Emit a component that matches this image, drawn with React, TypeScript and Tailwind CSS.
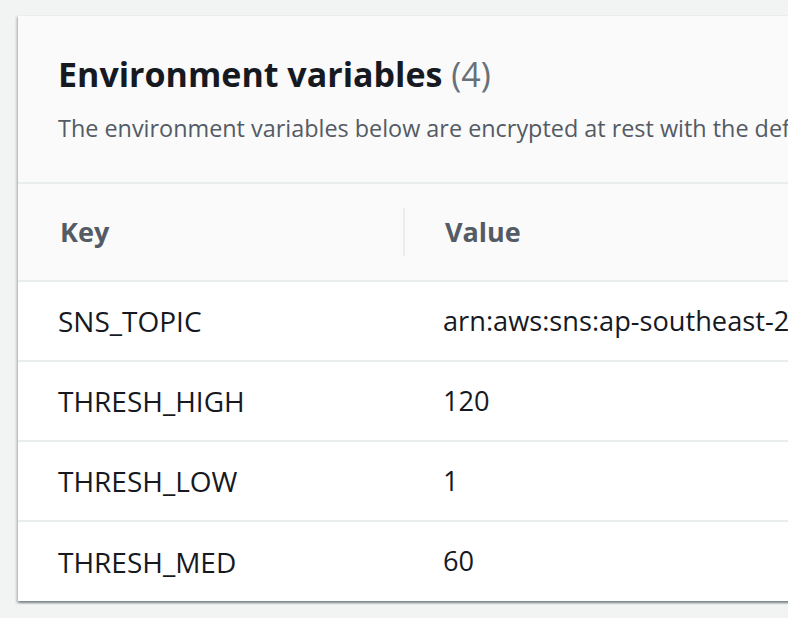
import React from "react";

const rows: [string, string][] = [
  ["SNS_TOPIC", "arn:aws:sns:ap-southeast-2"],
  ["THRESH_HIGH", "120"],
  ["THRESH_LOW", "1"],
  ["THRESH_MED", "60"],
];

export default function App() {
  return (
    <div
      className="w-[788px] h-[618px] overflow-hidden bg-[#f2f3f3] pl-[18px] pt-[15px]"
      style={{ fontFamily: '"Open Sans", "Noto Sans", sans-serif' }}
    >
      <div className="w-[1400px] bg-white border-t border-[#eaeded] shadow-[0_2px_2px_0_rgba(0,28,36,0.3),2px_2px_2px_0_rgba(0,28,36,0.15),-2px_2px_2px_0_rgba(0,28,36,0.15)]">
        <div className="bg-[#fafafa] border-b-2 border-[#eaeded] pt-[37px] pb-[38px] px-[40px]">
          <h2 className="text-[34px] leading-[42px] font-bold text-[#16191f] whitespace-nowrap">
            Environment variables{" "}
            <span className="font-normal text-[#687078]">(4)</span>
          </h2>
          <p className="mt-[17px] text-[23.4px] leading-[32px] text-[#545b64] whitespace-nowrap">
            The environment variables below are encrypted at rest with the default Lambda service key.
          </p>
        </div>
        <div className="grid grid-cols-[385px_1fr] bg-[#fafafa] border-b-2 border-[#eaeded] h-[98px]">
          <div className="flex items-center pl-[42px] text-[27px] font-bold text-[#545b64]">Key</div>
          <div className="flex items-center">
            <div className="w-[2px] h-[48px] bg-[#eaeded]" />
            <div className="pl-[40px] text-[27px] font-bold text-[#545b64]">Value</div>
          </div>
        </div>
        {rows.map(([k, v], i) => (
          <div
            key={k}
            className={
              i < rows.length - 1
                ? "grid grid-cols-[385px_1fr] h-[80px] border-b-2 border-[#eaeded] text-[28px] text-[#16191f]"
                : "grid grid-cols-[385px_1fr] h-[79px] text-[28px] text-[#16191f]"
            }
          >
            <div className="flex items-center pl-[40px]">{k}</div>
            <div className="flex items-center pl-[40px] whitespace-nowrap text-[27.2px]">{v}</div>
          </div>
        ))}
      </div>
    </div>
  );
}
